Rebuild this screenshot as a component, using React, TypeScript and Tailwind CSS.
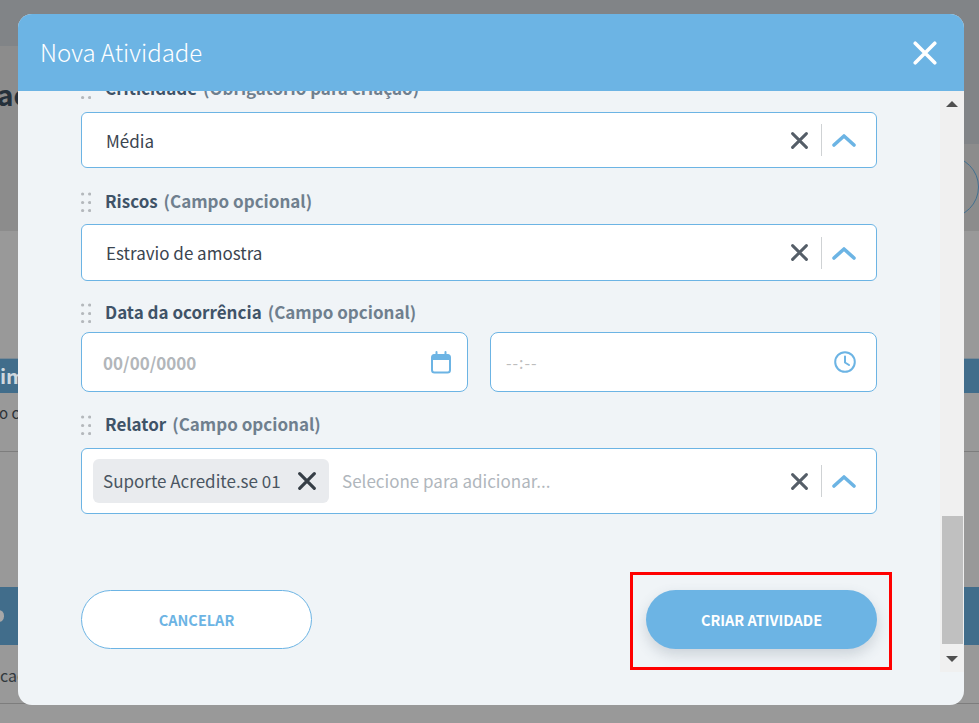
import React from "react";

function Grip() {
  return (
    <svg width="10" height="20" viewBox="0 0 10 20" className="mt-[2px] shrink-0" fill="#b4b8bc">
      <circle cx="1.6" cy="2" r="1.6" />
      <circle cx="8.6" cy="2" r="1.6" />
      <circle cx="1.6" cy="10.5" r="1.6" />
      <circle cx="8.6" cy="10.5" r="1.6" />
      <circle cx="1.6" cy="18.5" r="1.6" />
      <circle cx="8.6" cy="18.5" r="1.6" />
    </svg>
  );
}

function Label({ name, note, className }: { name: string; note: string; className: string }) {
  return (
    <div className={`flex h-[24px] items-center text-[17px] leading-[24px] font-bold ${className}`}>
      <Grip />
      <span className="ml-[14px] text-[#3f5368]">{name}</span>
      <span className="ml-[6px] text-[#6f7f8e]">{note}</span>
    </div>
  );
}

function Cross({ size, color, sw }: { size: number; color: string; sw: number }) {
  return (
    <svg width={size} height={size} viewBox="0 0 16 16" className="shrink-0">
      <path d="M1.5 1.5 L14.5 14.5 M14.5 1.5 L1.5 14.5" stroke={color} strokeWidth={sw} strokeLinecap="round" fill="none" />
    </svg>
  );
}

function SelectControls() {
  return (
    <div className="ml-auto flex h-full items-center">
      <Cross size={17} color="#555e68" sw={2.8} />
      <div className="ml-[13px] h-[32px] w-px bg-[#cfd2d4]" />
      <svg width="24" height="14" viewBox="0 0 24 14" className="ml-[10px] mr-[20px] shrink-0">
        <path d="M2 12 L12 3 L22 12" stroke="#6cb4e4" strokeWidth="3.6" strokeLinecap="round" strokeLinejoin="round" fill="none" />
      </svg>
    </div>
  );
}

function SelectBox({ value, height }: { value: string; height: string }) {
  return (
    <div className={`flex ${height} items-center rounded-[6px] border border-[#6cb4e4] bg-white`}>
      <span className="ml-[24px] mt-[1px] text-[17px] leading-[24px] text-[#3b4550]">{value}</span>
      <SelectControls />
    </div>
  );
}

export default function App() {
  return (
    <div className="relative h-[723px] w-[979px] overflow-hidden bg-[#999999] font-['Noto_Sans_CJK_JP','Noto_Sans',sans-serif]">
      {/* dimmed page behind the dialog */}
      <div className="h-[46px] bg-[#818487]" />
      <div className="flex h-[185px] justify-between bg-[#8c8c8c]">
        <div className="mt-[32px] -ml-[3px] text-[28px] leading-[32px] font-bold text-[#25303a]">ac</div>
        <div className="h-[98px] w-[20px] bg-[#818487]" />
      </div>
      <div className="relative h-[127px]">
        <div className="absolute top-[-75px] left-[917px] h-[62px] w-[62px] rounded-full border border-[#43708f]" />
      </div>
      <div className="h-[35px] border-t border-[#7a8a96] bg-[#416d8b] text-[20px] leading-[34px] font-bold text-[#cfd8de]">
        <span className="block">im</span>
      </div>
      <div className="h-[59px] border-b border-[#7d7d7d] pt-[9px] text-[15px] leading-[22px] text-[#2d3338]">
        <span className="-ml-[1px] block">o c</span>
      </div>
      <div className="h-[135px]" />
      <div className="flex h-[58px] items-center bg-[#416d8b]">
        <div className="-ml-[7px] h-[12px] w-[11px] rounded-full bg-[#a8a8a8]" />
      </div>
      <div className="h-[59px] border-b border-[#7d7d7d] pt-[19px] text-[16px] leading-[22px] text-[#33393f]">
        <span>cac</span>
      </div>

      {/* dialog */}
      <div className="absolute top-[14px] left-[18px] flex h-[691px] w-[946px] flex-col overflow-hidden rounded-[14px] bg-[#f0f4f7]">
        <div className="flex h-[77px] shrink-0 items-center justify-between bg-[#6cb4e4] pl-[22px] pr-[27px]">
          <span className="-mt-[2px] text-[24px] leading-[34px] font-light text-white">Nova Atividade</span>
          <Cross size={24} color="#ffffff" sw={2.4} />
        </div>
        <div className="flex h-[581px] shrink-0">
          <div className="flex-1 overflow-hidden px-[63px]">
            <Label name="Criticidade" note="(Obrigatório para criação)" className="-mt-[15px]" />
            <div className="mt-[12px]">
              <SelectBox value="Média" height="h-[56px]" />
            </div>

            <Label name="Riscos" note="(Campo opcional)" className="mt-[21px]" />
            <div className="mt-[11px]">
              <SelectBox value="Estravio de amostra" height="h-[57px]" />
            </div>

            <Label name="Data da ocorrência" note="(Campo opcional)" className="mt-[19px]" />
            <div className="mt-[8px] grid grid-cols-2 gap-[22px]">
              <div className="flex h-[60px] items-center justify-between rounded-[8px] border border-[#6cb4e4] bg-white pl-[21px] pr-[16px]">
                <span className="mt-[1px] text-[17px] leading-[24px] font-bold text-[#b2b6ba]">00/00/0000</span>
                <svg width="20" height="23" viewBox="0 0 20 23" fill="none">
                  <rect x="1" y="4" width="18" height="17.5" rx="2.5" stroke="#6cb4e4" strokeWidth="2" />
                  <path d="M1 5.5 a2 2 0 0 1 2 -2 h14 a2 2 0 0 1 2 2 V9 H1 Z" fill="#6cb4e4" />
                  <path d="M5.5 1 V4 M14.5 1 V4" stroke="#6cb4e4" strokeWidth="2" strokeLinecap="round" />
                </svg>
              </div>
              <div className="flex h-[60px] items-center justify-between rounded-[8px] border border-[#6cb4e4] bg-white pl-[15px] pr-[20px]">
                <span className="text-[16px] leading-[24px] tracking-[1px] text-[#bdbdbd]">--:--</span>
                <svg width="22" height="22" viewBox="0 0 22 22" fill="none">
                  <circle cx="11" cy="11" r="9.8" stroke="#6cb4e4" strokeWidth="2" />
                  <path d="M11 5.5 V11.5 L15 14" stroke="#6cb4e4" strokeWidth="2" strokeLinecap="round" strokeLinejoin="round" />
                </svg>
              </div>
            </div>

            <Label name="Relator" note="(Campo opcional)" className="mt-[20px]" />
            <div className="mt-[12px] flex h-[66px] items-center rounded-[6px] border border-[#6cb4e4] bg-white pl-[11px]">
              <div className="flex h-[44px] w-[236px] items-center rounded-[6px] bg-[#e9ebee] pl-[10px]">
                <span className="text-[17px] leading-[24px] text-[#4a5561]">Suporte Acredite.se 01</span>
                <span className="ml-auto mr-[13px]">
                  <Cross size={18} color="#363e46" sw={2.8} />
                </span>
              </div>
              <span className="ml-[13px] text-[17px] leading-[24px] text-[#b0b6bc]">Selecione para adicionar...</span>
              <SelectControls />
            </div>

            <div className="mt-[76px] flex justify-between">
              <button className="h-[59px] w-[231px] rounded-full border border-[#6cb4e4] bg-white text-[14.5px] font-bold text-[#6cb4e4]">
                CANCELAR
              </button>
              <button className="h-[59px] w-[231px] rounded-full bg-[#6cb4e4] text-[14.5px] font-bold text-white shadow-[0_6px_14px_rgba(60,80,100,0.2)]">
                CRIAR ATIVIDADE
              </button>
            </div>
          </div>

          {/* scrollbar */}
          <div className="flex w-[24px] shrink-0 flex-col items-center bg-[#f0f0f0]">
            <svg width="12" height="6" viewBox="0 0 12 6" className="mt-[10px] shrink-0">
              <path d="M6 0 L12 6 H0 Z" fill="#505050" />
            </svg>
            <div className="mt-[409px] h-[128px] w-[21px] bg-[#c0c0c0]" />
            <svg width="12" height="6" viewBox="0 0 12 6" className="mt-[12px] shrink-0">
              <path d="M0 0 H12 L6 6 Z" fill="#505050" />
            </svg>
          </div>
        </div>
      </div>

      {/* red highlight drawn on top of the screenshot */}
      <div className="absolute top-[572px] left-[630px] h-[98px] w-[262px] border-[3px] border-[#ff0000]" />
    </div>
  );
}
